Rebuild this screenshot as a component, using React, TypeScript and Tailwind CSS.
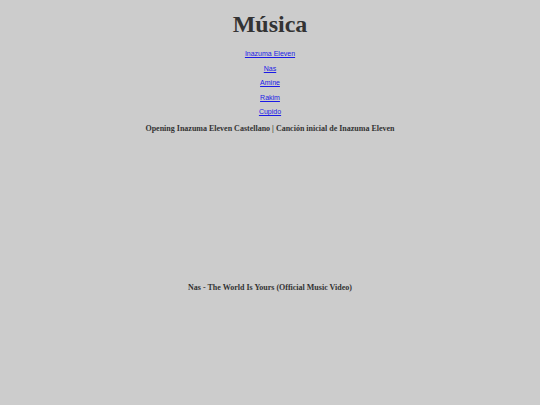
const links = ["Inazuma Eleven", "Nas", "Amine", "Rakim", "Cupido"]

const videos = [
  "Opening Inazuma Eleven Castellano | Canción inicial de Inazuma Eleven",
  "Nas - The World Is Yours (Official Music Video)",
]

export default function App() {
  return (
    <div className="h-[405px] w-[540px] overflow-hidden bg-[#cccccc] text-center">
      <h1 className="pt-[10px] font-['Liberation_Serif',serif] text-[24px] font-bold leading-[28px] text-[#333333]">
        Música
      </h1>
      <ul className="mt-[12px] flex flex-col items-center gap-[6.5px] font-['Liberation_Sans',Arial,sans-serif] text-[7px] leading-[8px]">
        {links.map((name) => (
          <li key={name}>
            <a href="#" className="text-[#1a1ae6] underline">
              {name}
            </a>
          </li>
        ))}
      </ul>
      <div className="mt-[8px] flex flex-col items-center">
        {videos.map((title) => (
          <section key={title} className="flex flex-col items-center">
            <h2 className="font-['Liberation_Serif',serif] text-[8px] font-bold leading-[10px] text-[#333333]">
              {title}
            </h2>
            <div className="h-[149px] w-[270px]" />
          </section>
        ))}
      </div>
    </div>
  )
}
